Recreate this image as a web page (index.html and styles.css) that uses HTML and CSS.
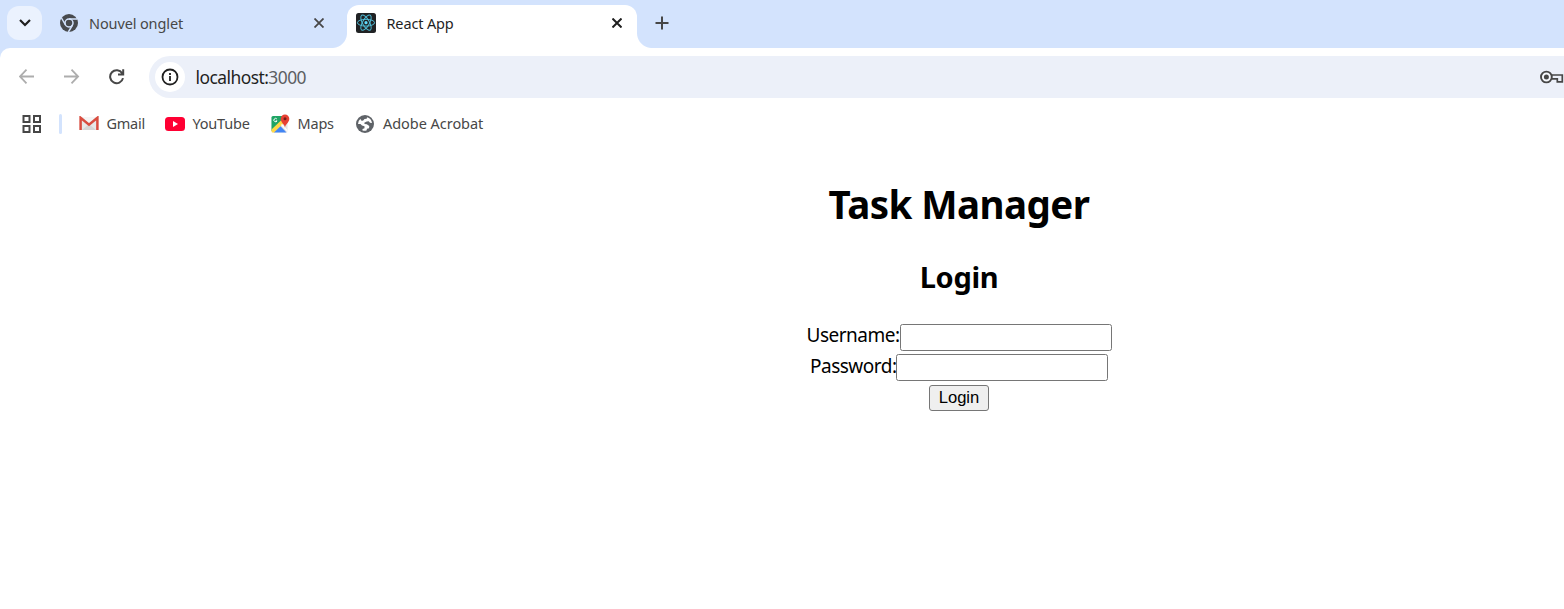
FILE: index.html
```html
<!DOCTYPE html>
<html lang="fr">
<head>
<meta charset="utf-8">
<title>React App</title>
<link rel="stylesheet" href="styles.css">
</head>
<body>
<div class="window">
  <header class="tabstrip">
    <div class="tab-search"><svg width="12" height="8" viewBox="0 0 12 8" fill="none" stroke="#1f1f1f" stroke-width="2.2"><path d="M1 1l5 5 5-5"/></svg></div>
    <div class="tab">
      <svg class="favicon" width="18" height="18" viewBox="0 0 18 18"><circle cx="9" cy="9" r="9" fill="#474a4e"/><circle cx="9" cy="9" r="4" fill="none" stroke="#d3e3fd" stroke-width="1.5"/><path d="M9 5h8.200M5.500 11L1.500 4M12.500 11l-4.100 7" stroke="#d3e3fd" stroke-width="1.500"/></svg>
      <span class="tab-title title-new">Nouvel onglet</span>
      <svg class="close" width="10" height="10" viewBox="0 0 10 10" stroke="#474747" stroke-width="1.8"><path d="M.5.5l9 9M9.5.5l-9 9"/></svg>
    </div>
    <div class="tab active">
      <svg class="favicon" width="20" height="20" viewBox="0 0 20 20"><rect width="20" height="20" rx="2.5" fill="#202224"/><g fill="none" stroke="#4fb9d3" stroke-width="1"><ellipse cx="10" cy="9.7" rx="8.6" ry="3.4"/><ellipse cx="10" cy="9.7" rx="8.6" ry="3.4" transform="rotate(60 10 9.7)"/><ellipse cx="10" cy="9.7" rx="8.6" ry="3.4" transform="rotate(120 10 9.7)"/></g><circle cx="10" cy="9.7" r="1.6" fill="#61dafb"/></svg>
      <span class="tab-title title-app">React App</span>
      <svg class="close" width="10" height="10" viewBox="0 0 10 10" stroke="#1f1f1f" stroke-width="2"><path d="M.5.5l9 9M9.5.5l-9 9"/></svg>
    </div>
    <svg class="new-tab" width="14" height="14" viewBox="0 0 14 14" stroke="#474747" stroke-width="2"><path d="M7 .5v13M.5 7h13"/></svg>
  </header>
  <nav class="toolbar">
    <svg class="nav-icon" width="16" height="16" viewBox="0 0 16 16" fill="none" stroke="#adadad" stroke-width="1.8"><path d="M15 7.500H1M7.500.7L.9 7.500l6.600 6.800"/></svg>
    <svg class="nav-icon" width="16" height="16" viewBox="0 0 16 16" fill="none" stroke="#adadad" stroke-width="1.8"><path d="M0 7.500h14M7.500.7l6.600 6.800-6.600 6.800"/></svg>
    <svg class="nav-icon" width="16" height="16" viewBox="0 0 16 16" fill="none" stroke="#474747" stroke-width="2"><path d="M14 9.100A6.500 6.500 0 1 1 13.200 4.300M14.200.3v5.200H9"/></svg>
    <div class="omnibox">
      <div class="site-info"><svg width="18" height="18" viewBox="0 0 18 18" fill="none" stroke="#1f1f1f" stroke-width="1.800"><circle cx="9" cy="9" r="7.500"/><path d="M9 8v5M9 5v2"/></svg></div>
      <span class="url">localhost:<span class="port">3000</span></span>
      <svg class="key" width="24" height="14" viewBox="0 0 24 14"><path d="M11.500 5h10.800v6.800h-5V8.800h-6" fill="none" stroke="#474747" stroke-width="1.700"/><circle cx="6.400" cy="7" r="5.400" fill="#f7f9fd" stroke="#474747" stroke-width="1.900"/><circle cx="6.400" cy="7" r="2.500" fill="#474747"/></svg>
    </div>
  </nav>
  <nav class="bookmarks">
    <svg class="apps" width="19" height="18" viewBox="0 0 19 18" fill="none" stroke="#474747" stroke-width="2"><path d="M1.500 1H7.500v6h-6zM12 1h6v6h-6zM1.500 11h6v6h-6zM12 11h6v6h-6z"/></svg>
    <i class="divider"></i>
    <div class="bookmark gmail"><svg width="20" height="15" viewBox="0 0 20 15"><path d="M1 1h18v13H1z" fill="#e8e8e8"/><path d="M3 14l7-6 7 6z" fill="#d6d6d6"/><path d="M3 1h14l-7 6z" fill="#f5f5f5"/><path d="M1.600 14V1.800L10 8.600l8.400-6.800V14" fill="none" stroke="#d94d40" stroke-width="2.500"/></svg><span>Gmail</span></div>
    <div class="bookmark youtube"><svg width="20" height="14" viewBox="0 0 20 14"><rect width="20" height="14" rx="3.500" fill="#ff0033"/><path d="M8 4l5 3-5 3z" fill="#fff"/></svg><span>YouTube</span></div>
    <div class="bookmark maps"><svg width="19" height="19" viewBox="0 0 19 19"><rect x=".5" y="2" width="16" height="16.500" rx="1.500" fill="#e4e4e4"/><path d="M2 2h10l-1 6L.5 17V3.500Q.5 2 2 2z" fill="#1fa565"/><path d="M.5 15.500L10.500 6l2.500 3L3.500 18.500H2Q.5 18.500.5 17z" fill="#ffd847"/><path d="M3 18.500l6.500-6.300 6 6.300z" fill="#4285f4"/><path d="M10 11l1-1 5.500 6v2z" fill="#fff"/><path d="M5.800 4.900a1.700 1.700 0 1 0 .3 2H4.700" fill="none" stroke="#fff" stroke-width="1"/><path d="M14 14c0-4-4.300-5.300-4.300-9.300a4.300 4.300 0 0 1 8.600 0c0 4-4.300 5.300-4.300 9.300z" fill="#e74133"/><circle cx="14" cy="4.800" r="1.500" fill="#751d18"/></svg><span>Maps</span></div>
    <div class="bookmark adobe"><svg width="18" height="18" viewBox="0 0 18 18"><circle cx="9" cy="9" r="9" fill="#5f6368"/><path d="M11 2.200A7 7 0 0 1 16 8l-2-.3-1.300-1.500-2 .4-2.400 1.200.3 1.200 2.200.2 2.500 1.800-.3 2.300-2 .4-.5 1.800A7 7 0 0 1 6.500 15.500V14l2-.8v-2L6 10.500 4.500 9H2A7 7 0 0 1 4.500 3.800L5 5.500l2 .3L8.500 4l2.200-.3z" fill="#fff"/></svg><span>Adobe Acrobat</span></div>
  </nav>
  <main class="page">
    <h1>Task Manager</h1>
    <h2>Login</h2>
    <form>
      <div class="field"><label class="user-label" for="user">Username:</label><input id="user" type="text"></div>
      <div class="field"><label class="pass-label" for="pass">Password:</label><input id="pass" type="password"></div>
      <button type="button">Login</button>
    </form>
  </main>
</div>
</body>
</html>
```
FILE: styles.css
```css
* { box-sizing: border-box; }
body { margin: 0; background: #fff; font-family: "Noto Sans", "Open Sans", sans-serif; color: #000; }
svg { display: block; flex: none; }
.window { width: 100%; height: 609px; overflow: hidden; }

.tabstrip { display: flex; height: 58px; padding: 0 0 10px 7px; background: #d3e3fd; }
.tab-search { width: 35px; height: 34px; margin-top: 6px; border-radius: 12px; background: #ebf2fe; display: flex; align-items: center; justify-content: center; }
.tab { position: relative; display: flex; align-items: center; width: 305px; height: 48px; padding: 0 23px 2px 18px; }
.tab-title { display: block; margin-left: 11px; font-size: 14.5px; line-height: 20px; white-space: nowrap; color: #474747; }
.title-new { letter-spacing: -0.12px; }
.title-app { color: #1f1f1f; letter-spacing: -0.15px; margin-left: 10.5px; }
.close { margin-left: auto; }
.tab.active { width: 290px; height: 43px; margin-top: 5px; padding: 0 15.5px 7px 9px; border-radius: 12px 12px 0 0; background: #fff; }
.tab.active::before, .tab.active::after { content: ""; position: absolute; bottom: 0; width: 15px; height: 15px; }
.tab.active::before { left: -15px; background: radial-gradient(circle at 0 0, #d3e3fd 14.5px, #fff 15.5px); }
.tab.active::after { right: -15px; background: radial-gradient(circle at 100% 0, #d3e3fd 14.5px, #fff 15.5px); }
.new-tab { margin: 16px 0 0 18px; }

.toolbar { display: flex; align-items: center; height: 56px; margin-top: -10px; padding: 2px 0 0 19px; border-radius: 10px 0 0 0; background: #fff; }
.nav-icon { margin-right: 29px; }
.omnibox { display: flex; align-items: center; flex: 1; height: 42px; margin-left: -5px; padding-left: 6px; border-radius: 21px 0 0 21px; background: #ecf0f9; }
.site-info { display: flex; align-items: center; justify-content: center; width: 30px; height: 30px; border-radius: 50%; background: #fff; }
.url { padding-left: 10.5px; font-size: 17.4px; letter-spacing: -0.53px; color: #1f1f1f; }
.port { color: #5c5e62; }
.key { margin-left: auto; }

.bookmarks { display: flex; align-items: center; height: 39px; padding-left: 22px; }
.divider { width: 3px; height: 20px; margin: 0 17px 0 18px; border-radius: 2px; background: #d3e3fd; }
.bookmark { display: flex; align-items: center; gap: 7.5px; font-size: 14.5px; line-height: 20px; letter-spacing: -0.2px; white-space: nowrap; color: #474747; }
.bookmark span { padding-bottom: 1px; }
.gmail { width: 86px; letter-spacing: -0.25px; }
.youtube { width: 106px; }
.maps { width: 85px; }
.adobe { gap: 9px; letter-spacing: -0.04px; }

.page { display: flex; flex-direction: column; align-items: center; padding: 33px 0 0 354px; }
h1 { margin: 0; font-size: 38.5px; line-height: 56px; letter-spacing: -0.55px; }
h2 { margin: 23px 0 0; font-size: 29px; line-height: 44px; letter-spacing: -0.3px; }
form { display: flex; flex-direction: column; align-items: center; padding-top: 25px; }
.field { display: flex; height: 27px; margin-bottom: 3px; align-items: center; }
.field label { font-size: 19px; line-height: 24px; letter-spacing: -0.5px; white-space: nowrap; padding-bottom: 4px; }
.field .user-label { width: 93px; padding-bottom: 6px; }
.pass-label { width: 86px; }
.field input { width: 212px; height: 27px; margin: 0; border: 1px solid #767676; border-radius: 2.5px; background: #fff; }
button { width: 60px; height: 26px; margin-top: 1px; padding: 0; border: 1px solid #767676; border-radius: 3px; background: #efefef; color: #000; font: 16.6px "Liberation Sans", Arial, sans-serif; }
```
